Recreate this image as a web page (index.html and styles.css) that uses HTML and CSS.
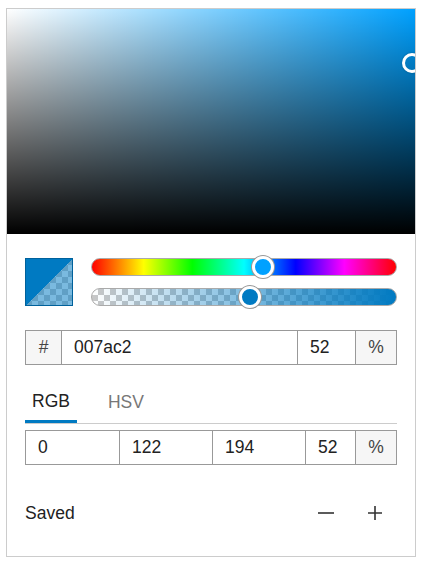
FILE: index.html
```html
<!DOCTYPE html>
<html lang="en">
<head>
    <meta charset="UTF-8">
    <meta name="viewport" content="width=device-width, initial-scale=1.0">
    <title>Color Picker</title>
    <link rel="stylesheet" href="styles.css">
</head>
<body>
    <div class="picker">
        <div class="sat-area">
            <span class="sat-handle"></span>
        </div>
        <div class="picker-body">
            <div class="preview-row">
                <div class="swatch"></div>
                <div class="sliders">
                    <div class="slider hue">
                        <span class="thumb hue-thumb" style="left: 56.2%"></span>
                    </div>
                    <div class="slider alpha">
                        <span class="thumb alpha-thumb" style="left: 52%"></span>
                    </div>
                </div>
            </div>

            <div class="field-row hex-row">
                <span class="addon">#</span>
                <input class="field" type="text" value="007ac2">
                <input class="field" type="text" value="52">
                <span class="addon">%</span>
            </div>

            <div class="tabs">
                <button class="tab active">RGB</button>
                <button class="tab">HSV</button>
            </div>

            <div class="field-row rgb-row">
                <input class="field" type="text" value="0">
                <input class="field" type="text" value="122">
                <input class="field" type="text" value="194">
                <input class="field" type="text" value="52">
                <span class="addon">%</span>
            </div>

            <div class="saved-row">
                <span class="saved-label">Saved</span>
                <div class="actions">
                    <button class="icon-btn" title="Remove">
                        <svg width="16" height="16" viewBox="0 0 16 16"><path d="M0 8h16" stroke="#333" stroke-width="1.6" fill="none"/></svg>
                    </button>
                    <button class="icon-btn" title="Add">
                        <svg width="14" height="14" viewBox="0 0 14 14"><path d="M0 7h14M7 0v14" stroke="#333" stroke-width="1.6" fill="none"/></svg>
                    </button>
                </div>
            </div>
        </div>
    </div>
</body>
</html>
```

FILE: styles.css
```css
body {
    margin: 0;
    padding: 8px 6px;
    background: #ffffff;
    font-family: 'Liberation Sans', Arial, sans-serif;
    color: #222;
}
.picker {
    width: 408px;
    border: 1px solid #cccccc;
    background: #fff;
}
.sat-area {
    position: relative;
    height: 225px;
    overflow: hidden;
    background:
        linear-gradient(to top, #000, rgba(0, 0, 0, 0)),
        linear-gradient(to right, #fff, rgba(255, 255, 255, 0)),
        hsl(202, 100%, 50%);
}
.sat-handle {
    position: absolute;
    left: calc(100% - 3px);
    top: 24%;
    width: 14px;
    height: 14px;
    border: 3px solid #fff;
    border-radius: 50%;
    transform: translate(-50%, -50%);
    box-shadow: 0 0 2px rgba(0, 0, 0, 0.3);
}
.picker-body {
    padding: 24px 18px 23px;
}
.preview-row {
    display: flex;
    gap: 18px;
}
.checker,
.swatch,
.alpha {
    background-color: #fff;
}
.swatch {
    width: 46px;
    height: 46px;
    border: 1px solid #00619b;
    background-image:
        linear-gradient(to bottom right, #007ac2 50%, rgba(0, 122, 194, 0.52) 50%),
        linear-gradient(45deg, #c8c8c8 25%, transparent 25%, transparent 75%, #c8c8c8 75%),
        linear-gradient(45deg, #c8c8c8 25%, transparent 25%, transparent 75%, #c8c8c8 75%);
    background-size: 100% 100%, 12px 12px, 12px 12px;
    background-position: 0 0, 0 0, 6px 6px;
}
.sliders {
    flex: 1;
    display: flex;
    flex-direction: column;
    justify-content: space-between;
}
.slider {
    position: relative;
    height: 16px;
    border: 1px solid #aaa;
    border-radius: 9px;
}
.hue {
    background: linear-gradient(to right, #f00, #ff0 17%, #0f0 33%, #0ff 50%, #00f 67%, #f0f 83%, #f00);
}
.alpha {
    background-image:
        linear-gradient(to right, rgba(0, 122, 194, 0), #007ac2),
        linear-gradient(45deg, #c8c8c8 25%, transparent 25%, transparent 75%, #c8c8c8 75%),
        linear-gradient(45deg, #c8c8c8 25%, transparent 25%, transparent 75%, #c8c8c8 75%);
    background-size: 100% 100%, 12px 12px, 12px 12px;
    background-position: 0 0, 0 0, 6px 6px;
}
.thumb {
    position: absolute;
    top: 50%;
    width: 16px;
    height: 16px;
    border: 3px solid #fff;
    border-radius: 50%;
    box-shadow: 0 0 0 1px #999;
    transform: translate(-50%, -50%);
}
.hue-thumb {
    background: hsl(202, 100%, 50%);
}
.alpha-thumb {
    background: #007ac2;
}
.field-row {
    display: grid;
    height: 33px;
    border: 1px solid #999;
    margin-top: 24px;
}
.hex-row {
    grid-template-columns: 35px 1fr 58px 41px;
}
.rgb-row {
    grid-template-columns: 1fr 1fr 1fr 50px 41px;
    margin-top: 6px;
}
.field-row > * + * {
    border-left: 1px solid #999;
}
.field {
    min-width: 0;
    border-top: none;
    border-right: none;
    border-bottom: none;
    padding: 0 0 0 12px;
    margin: 0;
    font-family: inherit;
    font-size: 17.5px;
    color: #222;
    outline: none;
    background: #fff;
}
.field-row > .field:first-child {
    border-left: none;
}
.addon {
    display: flex;
    align-items: center;
    justify-content: center;
    background: #f6f6f6;
    font-size: 17.5px;
    color: #444;
}
.tabs {
    display: flex;
    gap: 24px;
    margin-top: 26px;
    border-bottom: 1px solid #cccccc;
}
.tab {
    padding: 0 7px 9px;
    border: none;
    border-bottom: 3px solid transparent;
    margin-bottom: -1px;
    background: none;
    font-family: inherit;
    font-size: 17.5px;
    line-height: 20px;
    color: #777;
    cursor: pointer;
}
.tab.active {
    color: #222;
    border-bottom-color: #007ac2;
    margin-bottom: 0;
}
.saved-row {
    display: flex;
    align-items: center;
    justify-content: space-between;
    height: 40px;
    margin-top: 28px;
}
.saved-label {
    font-size: 17.5px;
}
.actions {
    display: flex;
    gap: 17px;
    padding-right: 6px;
}
.icon-btn {
    width: 32px;
    height: 32px;
    display: flex;
    align-items: center;
    justify-content: center;
    border: none;
    background: none;
    padding: 0;
    cursor: pointer;
}
```
